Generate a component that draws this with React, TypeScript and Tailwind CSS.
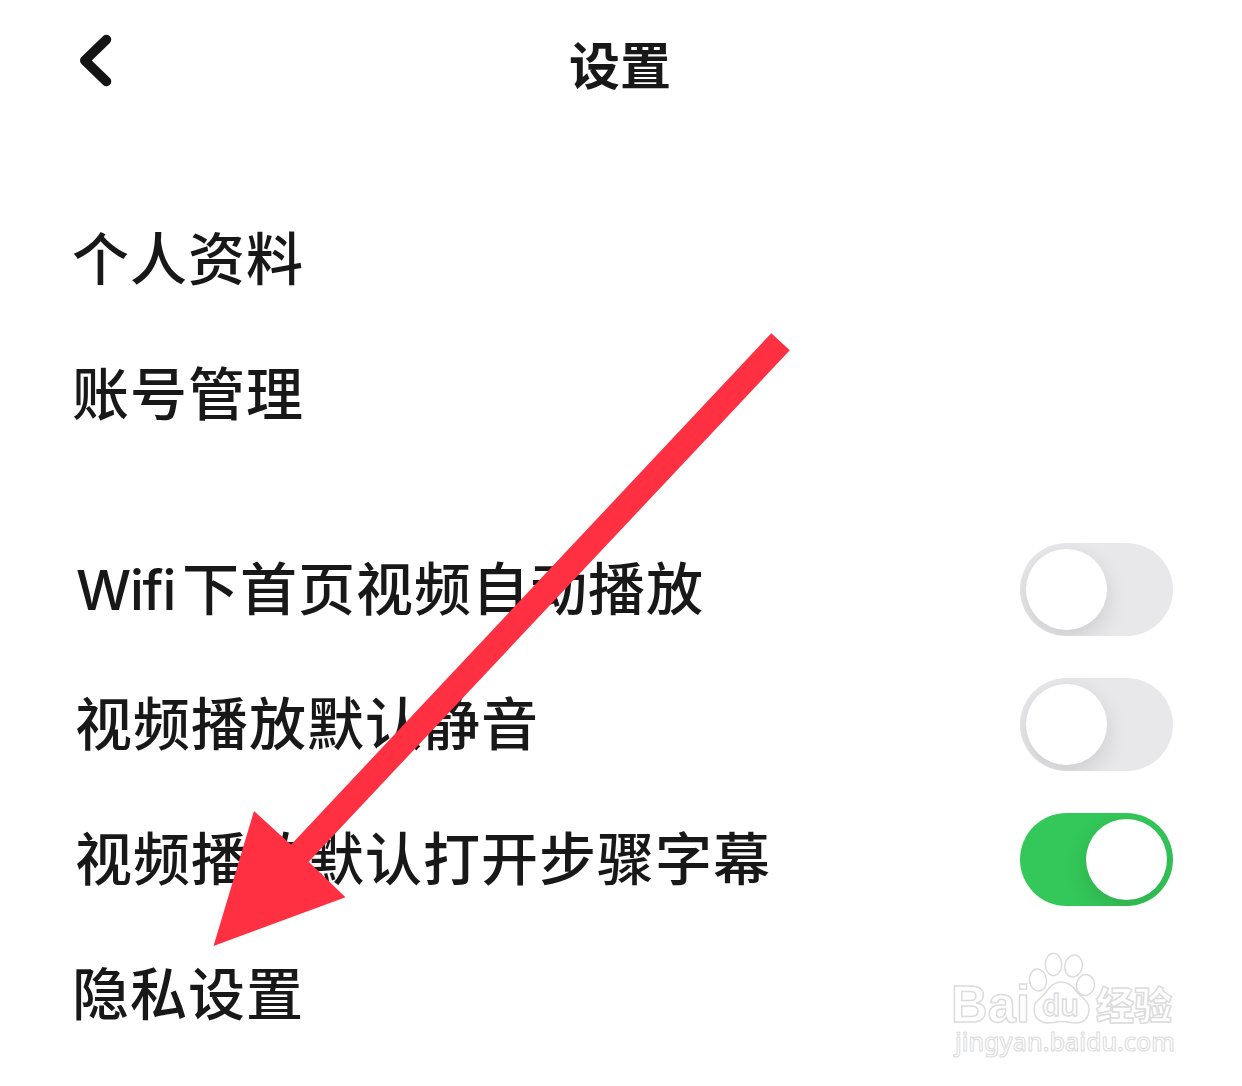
import { useState } from "react";
import clsx from "clsx";

const links = ["个人资料", "账号管理"];

const toggles = [
  { id: "autoplay", prefix: "Wifi", label: "下首页视频自动播放", on: false },
  { id: "mute", prefix: "", label: "视频播放默认静音", on: false },
  { id: "subtitle", prefix: "", label: "视频播放默认打开步骤字幕", on: true },
];

function Toggle({
  checked,
  onChange,
}: {
  checked: boolean;
  onChange: () => void;
}) {
  return (
    <button
      type="button"
      role="switch"
      aria-checked={checked}
      onClick={onChange}
      className={clsx(
        "flex h-[93px] w-[153px] items-center overflow-hidden rounded-full px-1.5",
        checked ? "justify-end bg-[#34c759]" : "justify-start bg-[#e8e8ea]"
      )}
    >
      <span className="h-[81px] w-[81px] rounded-full bg-white shadow-[0_8px_22px_rgba(0,0,0,0.12)]" />
    </button>
  );
}

function Watermark() {
  return (
    <svg
      viewBox="0 0 250 130"
      className="absolute left-[940px] top-[940px] h-[130px] w-[250px]"
      fill="#fff"
      stroke="#dcdcdc"
      strokeWidth="1.5"
      strokeLinejoin="round"
    >
      <ellipse cx="98" cy="40" rx="8.5" ry="11" transform="rotate(-8 98 40)" />
      <ellipse cx="113.5" cy="24.5" rx="8.2" ry="11.2" />
      <ellipse cx="133.5" cy="26" rx="8.7" ry="11" transform="rotate(12 133.5 26)" />
      <ellipse cx="145.5" cy="45" rx="9" ry="10.5" transform="rotate(10 145.5 45)" />
      <path d="M121 42c-7 0-11 4-15 10-5 7-12 9-12 17 0 9 6 14 14 14 5 0 9-1.5 14-1.5s9 1.5 13 1.5c9 0 14-5 14-14 0-8-7-11-12-17-4-6-9-10-16-10z" />
      <text
        x="11"
        y="82"
        fontSize="52"
        fontWeight="bold"
        fontFamily="'Liberation Sans', sans-serif"
        textLength="79"
        lengthAdjust="spacingAndGlyphs"
      >
        Bai
      </text>
      <text
        x="102"
        y="76"
        fontSize="30"
        fontFamily="'Noto Sans', sans-serif"
        fontWeight="600"
        textLength="37"
        lengthAdjust="spacingAndGlyphs"
      >
        du
      </text>
      <text
        x="156"
        y="79"
        fontSize="38"
        fontWeight="900"
        fontFamily="'Noto Sans CJK SC', sans-serif"
      >
        经验
      </text>
      <text
        x="15"
        y="111"
        fontSize="26"
        fontWeight="500"
        strokeWidth="1.1"
        fontFamily="'Noto Sans', sans-serif"
        textLength="220"
        lengthAdjust="spacingAndGlyphs"
      >
        jingyan.baidu.com
      </text>
    </svg>
  );
}

export default function App() {
  const [values, setValues] = useState(toggles.map((t) => t.on));

  function handleToggle(index: number) {
    setValues(values.map((v, i) => (i === index ? !v : v)));
  }

  return (
    <div className="relative h-[1086px] w-[1242px] overflow-hidden bg-white font-['Noto_Sans_CJK_SC',sans-serif] font-medium text-[#181818]">
      <header className="grid h-[132px] grid-cols-3 items-center">
        <button type="button" aria-label="返回" className="ml-[72px] w-12 pb-[11px]">
          <svg viewBox="0 0 48 60" className="h-15 w-12" fill="none">
            <path
              d="M34.5 8.500 12.8 29.500 34.5 50.500"
              stroke="#141414"
              strokeWidth="9.6"
              strokeLinecap="round"
              strokeLinejoin="round"
            />
          </svg>
        </button>
        <h1 className="pb-[5px] pr-0.5 text-center text-[51px] font-bold leading-none">
          设置
        </h1>
      </header>

      <main className="flex flex-col pl-[72px] pr-[69px] pt-[60px] text-[57px] leading-none tracking-[1px]">
        {links.map((label) => (
          <div key={label} className="flex h-[135px] items-center pb-[9px]">
            {label}
          </div>
        ))}

        <div className="mt-[60px]">
          {toggles.map((item, i) => (
            <div
              key={item.id}
              className="flex h-[135px] items-center justify-between pl-[3px]"
            >
              <span className="flex items-baseline pb-[9px]">
                {item.prefix && (
                  <span className="ml-px mr-[7px] font-['Inter','Noto_Sans_CJK_SC',sans-serif] text-[55px] leading-[0] tracking-[-1.2px]">
                    {item.prefix}
                  </span>
                )}
                <span>{item.label}</span>
              </span>
              <Toggle checked={values[i]} onChange={() => handleToggle(i)} />
            </div>
          ))}
        </div>

        <div className="flex h-[135px] items-center pb-[9px]">隐私设置</div>
      </main>

      <Watermark />

      {/* pointer to the privacy entry */}
      <svg
        viewBox="0 0 1242 1086"
        className="pointer-events-none absolute inset-0 h-full w-full"
      >
        <path
          d="M771.3 333.2 789.8 350.3 308.7 861.7 345.5 897.3 213.5 946 254 811 291 844.7z"
          fill="#ff3042"
        />
      </svg>
    </div>
  );
}
